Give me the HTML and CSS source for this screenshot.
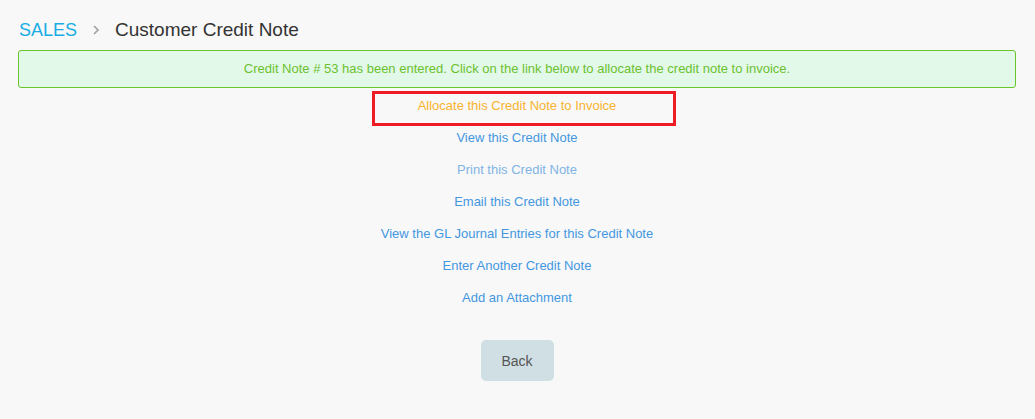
FILE: index.html
```html
<!DOCTYPE html>
<html>
<head>
    <title>Customer Credit Note</title>
    <link rel="stylesheet" href="styles.css">
</head>
<body>
    <div class="page">
        <div class="breadcrumb">
            <a href="#" class="crumb-root">SALES</a>
            <span class="crumb-sep">
                <svg width="8" height="12" viewBox="0 0 8 12"><path d="M2 2 L6 6 L2 10" fill="none" stroke="#a0a0a0" stroke-width="1.6"/></svg>
            </span>
            <span class="crumb-title">Customer Credit Note</span>
        </div>

        <div class="alert success">Credit Note # 53 has been entered. Click on the link below to allocate the credit note to invoice.</div>

        <div class="links">
            <div class="link-row highlight">
                <a href="#" class="link-allocate">Allocate this Credit Note to Invoice</a>
                <span class="mark"></span>
            </div>
            <div class="link-row"><a href="#">View this Credit Note</a></div>
            <div class="link-row"><a href="#" class="muted">Print this Credit Note</a></div>
            <div class="link-row"><a href="#">Email this Credit Note</a></div>
            <div class="link-row"><a href="#">View the GL Journal Entries for this Credit Note</a></div>
            <div class="link-row"><a href="#">Enter Another Credit Note</a></div>
            <div class="link-row"><a href="#">Add an Attachment</a></div>
        </div>

        <div class="actions">
            <button type="button" class="btn-back">Back</button>
        </div>
    </div>
</body>
</html>
```

FILE: styles.css
```css
body {
    margin: 0;
    background-color: #f8f8f8;
    font-family: "Liberation Sans", Arial, sans-serif;
}
.page {
    padding: 18px 19px 0 18px;
}
.breadcrumb {
    display: flex;
    align-items: center;
    height: 24px;
    padding-left: 1px;
    margin-bottom: 8px;
}
.crumb-root {
    color: #17ade4;
    font-size: 18px;
    text-decoration: none;
}
.crumb-sep {
    display: flex;
    margin: 0 15px 0 15px;
}
.crumb-title {
    color: #333;
    font-size: 19px;
}
.alert {
    border-radius: 3px;
    padding: 11px 10px;
    font-size: 13px;
    line-height: 14px;
    text-align: center;
}
.alert.success {
    background-color: #e2f9e9;
    border: 1px solid #69c52b;
    color: #6cc12e;
}
.links {
    display: flex;
    flex-direction: column;
    align-items: center;
    margin-top: 1px;
}
.link-row {
    height: 32px;
    display: flex;
    align-items: center;
    justify-content: center;
}
.link-row a {
    color: #4397e0;
    font-size: 13px;
    text-decoration: none;
}
.link-row a.muted {
    color: #80b4e4;
}
.link-row a.link-allocate {
    color: #f8b32e;
}
.link-row a:hover {
    text-decoration: underline;
}
.highlight {
    position: relative;
}
.mark {
    position: absolute;
    left: 50%;
    margin-left: -145px;
    top: 2px;
    width: 298px;
    height: 29px;
    border: 3px solid #ee1c25;
}
.actions {
    display: flex;
    justify-content: center;
    margin-top: 27px;
}
.btn-back {
    background-color: #d0dfe3;
    color: #555;
    border: none;
    border-radius: 5px;
    width: 73px;
    height: 41px;
    font-family: "Liberation Sans", Arial, sans-serif;
    font-size: 14px;
    cursor: pointer;
}
```
